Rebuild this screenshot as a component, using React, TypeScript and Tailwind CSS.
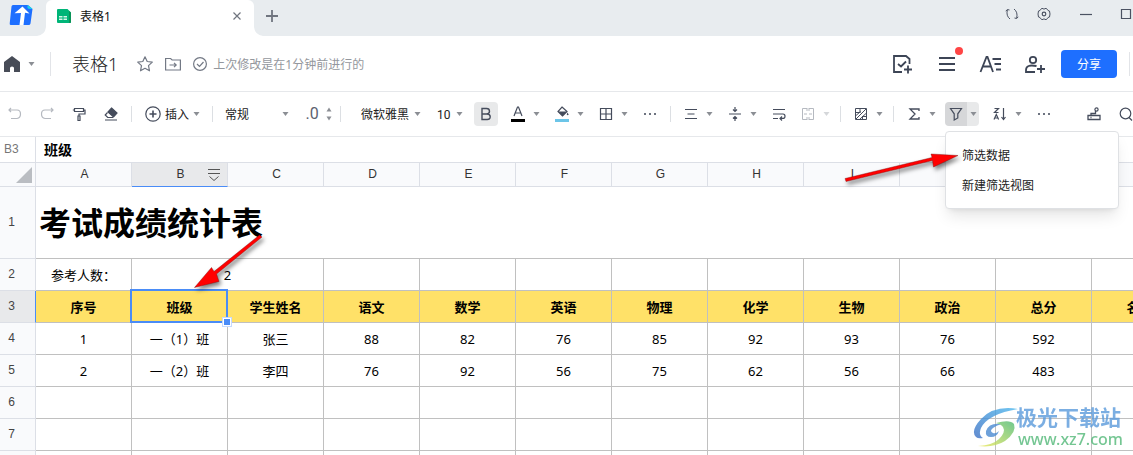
import { useState } from 'react'
import type { ReactNode } from 'react'

type Row = { id: number; values: string[] }

const COLUMNS = ['A', 'B', 'C', 'D', 'E', 'F', 'G', 'H', 'I', 'J', 'K', 'L']

const SUBJECTS = ['序号', '班级', '学生姓名', '语文', '数学', '英语', '物理', '化学', '生物', '政治', '总分', '名次']

const ROWS: Row[] = [
  { id: 4, values: ['1', '一（1）班', '张三', '88', '82', '76', '85', '92', '93', '76', '592', ''] },
  { id: 5, values: ['2', '一（2）班', '李四', '76', '92', '56', '75', '62', '56', '66', '483', ''] },
  { id: 6, values: Array(12).fill('') },
  { id: 7, values: Array(12).fill('') },
  { id: 8, values: Array(12).fill('') },
]

const CELL = 'h-8 border-r border-b border-[#c0c0c0] p-0 text-center text-[13px] leading-4 whitespace-nowrap'
const ROW_HEAD = "h-8 border-r border-b border-[#dcdfe6] p-0 pr-3 pb-0.5 text-center font-['Liberation_Sans',sans-serif] text-xs font-normal text-[#444]"

function Caret({ light }: { light?: boolean }) {
  return (
    <svg viewBox="0 0 7 4" className={`h-1 w-[7px] shrink-0 ${light ? 'text-[#d5d7da]' : 'text-[#8b8e94]'}`} fill="currentColor">
      <path d="M.5 0h6L3.500 4z" />
    </svg>
  )
}

function Icon({ children, size = 's' }: { children: ReactNode; size?: 's' | 'm' | 'l' }) {
  const box = size === 's' ? '0 0 14 14' : size === 'm' ? '0 0 16 16' : '0 0 22 22'
  const cls = size === 's' ? 'size-3.5' : size === 'm' ? 'size-4' : 'size-[22px]'
  return (
    <svg viewBox={box} className={`${cls} shrink-0`} fill="none" stroke="currentColor" strokeWidth={size === 'l' ? 1.8 : 1.2}>
      {children}
    </svg>
  )
}

function Tool({ label, caret, light, children }: { label: string; caret?: boolean; light?: boolean; children: ReactNode }) {
  return (
    <button type="button" aria-label={label} className={`flex shrink-0 items-center gap-2 ${light ? 'text-[#b5b9c0]' : ''}`}>
      {children}
      {caret && <Caret light={light} />}
    </button>
  )
}

function Divider() {
  return <span className="h-4 w-px shrink-0 bg-[#dcdfe3]" />
}

function Picker({ label, options, className }: { label: string; options: string[]; className: string }) {
  return (
    <span className={`relative flex shrink-0 items-center text-xs ${className}`}>
      <select aria-label={label} className="w-full appearance-none bg-transparent p-0 pt-0.5 text-[#222] outline-none">
        {options.map(o => <option key={o}>{o}</option>)}
      </select>
      <span className="pointer-events-none absolute right-0 flex"><Caret /></span>
    </span>
  )
}

function Dots() {
  return (
    <svg viewBox="0 0 14 14" className="size-3.5" fill="#6d7380">
      <rect x="1" y="6" width="2" height="2" />
      <rect x="6" y="6" width="2" height="2" />
      <rect x="11" y="6" width="2" height="2" />
    </svg>
  )
}

function TitleBar() {
  return (
    <div className="flex h-9 shrink-0 bg-[#e8ecef] text-[#4b5262]">
      <svg viewBox="0 0 24 21" className="mt-[5px] ml-[9px] h-[21px] w-6" aria-label="文档">
        <path d="M4 0h15l4.500 4-2 14.500q-.3 1.500-2 1.500H2Q.5 20 .7 18.500L2.500 1.500Q2.700 0 4 0z" fill="#1e6fff" />
        <path d="M18.500 0l5 3.800q-4 .5-5-.8z" fill="#19d3e8" />
        <path d="M13.500 1.500l7 7-4.500-.7L14.500 20h-4L12 8l-6.500.2z" fill="#fff" />
      </svg>
      <div className="relative ml-[13px] flex w-52 items-center rounded-t-md bg-white pb-1">
        <svg viewBox="0 0 9 9" className="absolute bottom-0 -left-[9px] size-[9px]"><path d="M9 0v9H0Q8 8 9 0z" fill="#fff" /></svg>
        <svg viewBox="0 0 9 9" className="absolute -right-[9px] bottom-0 size-[9px]"><path d="M0 0v9h9Q1 8 0 0z" fill="#fff" /></svg>
        <svg viewBox="0 0 14 14" className="ml-[11px] size-3.5">
          <path d="M1 0h9.500L14 3.500V13q0 1-1 1H1q-1 0-1-1V1q0-1 1-1z" fill="#00b578" />
          <path d="M12 2l2 1.500V13q0 1-1 1h-1z" fill="#0a9358" />
          <path d="M2 7h3.500v1.500H2zM6.500 7H10v1.500H6.500zM2 9.500h3.500V11H2zM6.500 9.500H10V11H6.500z" fill="#d8f5e9" />
        </svg>
        <span className="ml-[9px] pt-0.5 text-xs text-[#111]">表格1</span>
        <button type="button" aria-label="关闭标签" className="mr-2.5 ml-auto text-[#70757f]">
          <Icon><path d="M3.500 3.500l7 7M10.500 3.500l-7 7" /></Icon>
        </button>
      </div>
      <button type="button" aria-label="新建标签" className="ml-[11px] flex items-center pb-1 text-[#70757f]">
        <Icon><path d="M7 1v12M1 7h12" strokeWidth="1.800" /></Icon>
      </button>
      <div className="ml-auto flex items-center gap-[18px] pb-2">
        <button type="button" aria-label="刷新">
          <Icon><path d="M5 12Q1 9 2.300 3M.8 4.200L2.300 2.500 4.500 3M9 2q4 3 2.700 9M13.200 9.800l-1.500 1.700L9.500 11" strokeWidth="1" /></Icon>
        </button>
        <button type="button" aria-label="设置">
          <Icon>
            <path d="M4.500 1.500h1.500l1 .8 1-.8h1.500l1.500 2 1.500.5.5 3-.5 3-1.500.5-1.500 2H8l-1-.8-1 .8H4.500L3 10.500 1.500 10 1 7l.5-3L3 3.500z" strokeWidth="1" />
            <circle cx="7" cy="7" r="1.800" />
          </Icon>
        </button>
        <button type="button" aria-label="最小化" className="ml-2.5"><Icon><path d="M1 7.500h12" /></Icon></button>
        <button type="button" aria-label="最大化" className="ml-2"><Icon><path d="M2.500 2.500h9v9h-9z" /></Icon></button>
      </div>
    </div>
  )
}

function DocHeader() {
  return (
    <header className="flex h-14 shrink-0 items-center border-b border-[#e6e8eb] text-[#3d4556]">
      <button type="button" aria-label="首页" className="ml-1 flex items-center gap-2 text-[#474c57]">
        <svg viewBox="0 0 16 16" className="size-4" fill="currentColor"><path d="M8 0l8 6v9.500q0 .5-.5.5H10v-4q0-1.500-2-1.500T6 12v4H.5Q0 16 0 15.500V6z" /></svg>
        <Caret />
      </button>
      <span className="ml-[15px] h-6 w-px shrink-0 bg-[#e2e4e8]" />
      <h1 className="ml-[21px] text-lg font-light whitespace-nowrap text-[#222]">表格1</h1>
      <div className="ml-[19px] flex items-center gap-3 text-[#737985]">
        <button type="button" aria-label="收藏"><Icon size="m"><path d="M8 .8l2.200 4.700 5.100.6-3.800 3.500 1 5.200L8 12.300l-4.500 2.500 1-5.200L.7 6.100l5.100-.6z" strokeLinejoin="round" /></Icon></button>
        <button type="button" aria-label="移动到文件夹"><Icon size="m"><path d="M.6 2.500h5l1.500 1.500h8.300v10H.6zM4.500 9h6.500M9 6.800L11.200 9 9 11.200" /></Icon></button>
        <span className="flex items-center gap-1 text-xs whitespace-nowrap text-[#94979d]">
          <span className="flex text-[#737985]"><Icon size="m"><circle cx="7" cy="8" r="6.400" /><path d="M4 8l2.500 2.500 4-4.500" /></Icon></span>
          <span className="pt-0.5">上次修改是在1分钟前进行的</span>
        </span>
      </div>
      <div className="ml-auto flex items-center gap-[22px]">
        <button type="button" aria-label="添加任务">
          <Icon size="l"><path d="M18.500 11V6L15 3H3v16h8M17 12.500v8M13 16.500h8M7 11l3 2.500 5-5" /></Icon>
        </button>
        <button type="button" aria-label="菜单" className="relative">
          <Icon size="l"><path d="M4 5h16M4 11h16M4 17h16" /></Icon>
          <span className="absolute -top-1.5 -right-1.5 size-2 rounded-full bg-[#ff4545]" />
        </button>
        <button type="button" aria-label="样式">
          <Icon size="l"><path d="M1.500 19L7.500 4h1l5.500 15M4 13.500h8.500M13.500 6H22.500M15.500 11h7M17 16.500h5.500" /></Icon>
        </button>
        <button type="button" aria-label="添加成员">
          <Icon size="l"><circle cx="10" cy="7" r="3.200" /><path d="M13.500 13Q3 11 3 17v2h9M18 12v8M14 16h8" /></Icon>
        </button>
        <button type="button" className="-ml-1.5 h-7 w-14 rounded bg-[#1e6fff] pt-0.5 text-xs text-white">分享</button>
        <span className="-ml-2.5 mr-[3px] h-6 w-px bg-[#e2e4e8]" />
      </div>
    </header>
  )
}

function FilterTool() {
  const [open, setOpen] = useState(true)
  return (
    <div className="relative ml-[9px] flex shrink-0">
      <button type="button" aria-label="筛选" className="flex h-6 w-[22px] items-center justify-center rounded-l-sm bg-[#d6d7d9]">
        <Icon><path d="M1.500 1.500h11L8.800 6.800v4.200l-3.600 2V6.800z" /></Icon>
      </button>
      <button type="button" aria-label="筛选选项" aria-expanded={open} onClick={() => setOpen(!open)} className="flex h-6 w-3 items-center justify-center rounded-r-sm bg-[#e8e9ea]">
        <Caret />
      </button>
      {open && (
        <div role="menu" className="absolute top-[29px] left-0 z-20 flex w-[174px] flex-col rounded border border-[#dfe1e4] bg-white py-2 shadow-lg">
          {['筛选数据', '新建筛选视图'].map(item => (
            <button key={item} type="button" role="menuitem" className="h-[30px] px-4 pt-0.5 text-left text-xs text-[#222] hover:bg-gray-100">{item}</button>
          ))}
        </div>
      )}
    </div>
  )
}

function Toolbar() {
  return (
    <div className="flex h-[45px] shrink-0 items-center border-b border-[#e6e8eb] pl-2 text-[#454c5c]">
      <div className="flex items-center gap-[18px]">
        <Tool label="撤销" light><Icon><path d="M3 1L1 3l2 2M1 3H9q3.500 0 3.500 4T9 11.500H3" /></Icon></Tool>
        <Tool label="重做" light><Icon><path d="M11 1l2 2-2 2M13 3H5Q1.500 3 1.500 7T5 11.500h6" /></Icon></Tool>
        <Tool label="格式刷"><Icon><path d="M2.500 1.500h9v3h-9zM2.500 3H.8M11.500 3h1.500v4H7v2M6 9h2v4.500H6z" /></Icon></Tool>
        <Tool label="清除格式">
          <Icon><path d="M7.500 1l5.500 5-3.500 4-5.500-5z" fill="currentColor" /><path d="M3.500 5.500L1.200 8l2.500 2.500H9M1 13h12" /></Icon>
        </Tool>
      </div>
      <div className="ml-[13px] flex items-center gap-3">
        <Divider />
        <button type="button" className="ml-px flex items-center gap-1 text-xs whitespace-nowrap text-[#222]">
          <span className="flex text-[#454c5c]"><Icon size="m"><circle cx="8" cy="8" r="7.200" /><path d="M8 4.500v7M4.500 8h7" strokeWidth="1.600" /></Icon></span>
          <span className="pt-0.5">插入</span>
          <Caret />
        </button>
        <Divider />
        <Picker label="数字格式" options={['常规', '数字', '百分比']} className="w-16" />
      </div>
      <button type="button" className="ml-4 w-3.5 font-['Roboto',sans-serif] text-base text-[#5c626e]">.0</button>
      <button type="button" aria-label="调整小数位数" className="ml-1.5 text-[#8b8e94]">
        <svg viewBox="0 0 8 14" className="h-3.5 w-2" fill="currentColor"><path d="M1.500 4.500h5L4 .5zM1.500 9.500h5L4 13.500z" /></svg>
      </button>
      <div className="ml-[7px] flex items-center"><Divider /></div>
      <Picker label="字体" options={['微软雅黑', '宋体', '黑体']} className="ml-5 w-[60px]" />
      <Picker label="字号" options={['10', '12', '14']} className="ml-4 w-[26px] font-['Roboto',sans-serif]" />
      <button type="button" aria-label="加粗" className="ml-[11px] flex size-6 shrink-0 items-center justify-center rounded-sm bg-[#e8e9ea]">
        <Icon><path d="M3 1.500h4.500q3 0 3 2.700T7.500 7H3zM3 7h5q3.200 0 3.200 2.800T8 12.500H3z" strokeWidth="1.400" /></Icon>
      </button>
      <div className="ml-[13px] flex items-center gap-[15px]">
        <Tool label="字体颜色" caret>
          <svg viewBox="0 0 14 16" className="h-4 w-3.5" fill="none" stroke="currentColor" strokeWidth="1.200">
            <path d="M3 10L6.500 1h1L11 10M4.200 7h5.600" />
            <path d="M0 13h14v3H0z" fill="#000" stroke="none" />
          </svg>
        </Tool>
        <Tool label="填充颜色" caret>
          <svg viewBox="0 0 14 16" className="h-4 w-3.5" fill="none" stroke="currentColor" strokeWidth="1.200">
            <path d="M7 1l5 4.500L7.500 10 3 5.500z" />
            <path d="M3 5.500h9L7.500 10zM12.500 6.500l1.200 2q-1 1.500-2 0z" fill="currentColor" stroke="none" />
            <path d="M0 13h14v3H0z" fill="#6cc5e8" stroke="none" />
          </svg>
        </Tool>
        <Tool label="边框" caret><Icon><path d="M1.500 1.500h11v11h-11zM7 1.500v11M1.500 7h11" /></Icon></Tool>
        <Tool label="更多格式"><Dots /></Tool>
      </div>
      <div className="ml-[13px] flex items-center gap-[13px]">
        <Divider />
        <div className="flex items-center gap-[15px]">
          <Tool label="水平对齐" caret><Icon><path d="M1 2.500h12M3.500 7h7M1 11.500h12" strokeWidth="1.200" /></Icon></Tool>
          <Tool label="垂直对齐" caret><Icon><path d="M1 7h12M7 0v4M5 2.500l2 2 2-2M7 14v-4M5 11.500l2-2 2 2" /></Icon></Tool>
          <Tool label="自动换行"><Icon><path d="M1 2.500h12M1 7h10q2 0 2 2.200t-2 2.200H8M10 9.500L8 11.500l2 2M1 11.500h5" /></Icon></Tool>
          <Tool label="合并单元格" caret light><Icon><path d="M6 1.500H1.500V5M8 1.500h4.500V5M1.500 9v3.500H6M12.500 9v3.500H8M1.500 5v4M12.500 5v4M6 1v3M8 1v3M6 10v3M8 10v3M3 7h3M8 7h3" strokeWidth="1" /></Icon></Tool>
        </div>
      </div>
      <div className="ml-2.5 flex items-center gap-[13px]">
        <Divider />
        <Tool label="条件格式" caret><Icon><path d="M1.500 1.500h11v11h-11zM1.500 5.500h5M8.500 9.500h4M6 1.500v4M8.500 9v3.500M2 12L12 2M2 8.500l4.500-4M6 12l6.500-6" strokeWidth="1" /></Icon></Tool>
      </div>
      <div className="ml-2.5 flex items-center gap-[13px]">
        <Divider />
        <Tool label="求和" caret><Icon><path d="M12 4V2H3l5 5-5 5h9v-2" strokeWidth="1.300" /></Icon></Tool>
      </div>
      <FilterTool />
      <div className="ml-3.5 flex items-center gap-[15px]">
        <Tool label="排序" caret><Icon><path d="M1.500 1.500h4l-4 4h4M1 12.500l2.300-5 2.300 5M2 11h3M10.500 1v11M8.500 10l2 2.500 2-2.500" /></Icon></Tool>
        <Tool label="更多工具"><Dots /></Tool>
      </div>
      <div className="ml-auto flex items-center gap-[18px]">
        <Tool label="固定工具栏"><Icon><path d="M1 8.500h12v4H1zM4 8.500V6.500h4.500V4M3.500 10.500h1" strokeWidth="1.300" /><circle cx="9.500" cy="2.500" r="1.600" /></Icon></Tool>
        <Tool label="搜索"><Icon><circle cx="6.500" cy="6.500" r="5.300" /><path d="M10 10.500l3 3" /></Icon></Tool>
      </div>
    </div>
  )
}

function FormulaBar() {
  return (
    <div className="flex h-[26px] shrink-0 items-center border-b border-[#dcdfe6]">
      <input aria-label="单元格" defaultValue="B3" className="h-full w-9 shrink-0 border-r border-[#dcdfe6] pb-0.5 pl-1 font-['Liberation_Sans',sans-serif] text-xs text-[#777] outline-none" />
      <input aria-label="编辑栏" defaultValue="班级" className="h-full flex-1 pb-0.5 pl-2 text-sm font-bold text-black outline-none" />
    </div>
  )
}

function Sheet() {
  return (
    <table className="w-[1188px] table-fixed border-separate border-spacing-0 text-black">
      <colgroup>
        <col className="w-9" />
        {COLUMNS.map(c => <col key={c} className="w-24" />)}
      </colgroup>
      <thead>
        <tr className="bg-[#f9fafc]">
          <th className="h-6 border-r border-b border-[#dcdfe6] p-0">
            <svg viewBox="0 0 16 16" className="ml-4 size-4" fill="#babdc2"><path d="M16 0v16H0z" /></svg>
          </th>
          {COLUMNS.map(c => (
            <th key={c} scope="col" className={`relative h-6 border-r border-b p-0 pb-0.5 pl-0.5 font-['Liberation_Sans',sans-serif] text-xs font-normal text-[#333] ${c === 'B' ? 'border-r-[#dcdfe6] border-b-[#4a8cf7] bg-[#e8e9eb]' : 'border-[#dcdfe6]'}`}>
              {c}
              {c === 'B' && (
                <svg viewBox="0 0 12 12" className="absolute top-1.5 right-[7px] size-3" fill="none" stroke="#555" strokeWidth="1">
                  <path d="M0 .5h12M0 4.500h12M1.500 7.500L6 11.500l4.500-4" />
                </svg>
              )}
            </th>
          ))}
        </tr>
      </thead>
      <tbody>
        <tr>
          <th scope="row" className={`${ROW_HEAD} bg-[#f9fafc]`}>1</th>
          <td colSpan={12} className="h-[72px] border-b border-[#c0c0c0] p-0 pl-[3px] text-left text-[32px] leading-10 font-bold">考试成绩统计表</td>
        </tr>
        <tr>
          <th scope="row" className={`${ROW_HEAD} bg-[#f9fafc]`}>2</th>
          <td className={CELL}>参考人数：</td>
          <td colSpan={2} className={CELL}>2</td>
          {SUBJECTS.slice(3).map(s => <td key={s} className={CELL} />)}
        </tr>
        <tr className="bg-[#ffe168]">
          <th scope="row" className="h-8 border-r border-b border-r-[#4a8cf7] border-b-[#dcdfe6] bg-[#e8e9eb] p-0 pr-3 pb-0.5 font-['Liberation_Sans',sans-serif] text-xs font-normal text-[#444]">3</th>
          {SUBJECTS.map((s, i) => (
            <td key={s} className={`${CELL} relative font-bold`}>
              {s}
              {i === 1 && (
                <span className="absolute -inset-px -top-0.5 -left-0.5 z-10 border-2 border-[#4a8cf7]">
                  <span className="absolute -right-[5px] -bottom-[5px] size-2 border border-white bg-[#4a8cf7] outline outline-[#c5daff]" />
                </span>
              )}
            </td>
          ))}
        </tr>
        {ROWS.map(row => (
          <tr key={row.id}>
            <th scope="row" className={`${ROW_HEAD} bg-[#f9fafc]`}>{row.id}</th>
            {row.values.map((v, i) => <td key={i} className={CELL}>{v}</td>)}
          </tr>
        ))}
      </tbody>
    </table>
  )
}

function Arrows() {
  return (
    <svg width="1133" height="455" viewBox="0 0 1133 455" className="pointer-events-none absolute top-0 left-0 z-30 drop-shadow-[2px_3px_2px_rgba(0,0,0,0.5)]" fill="#ff0000" stroke="#7a1010" strokeWidth="0.400">
      <path d="M845 178.500l87-21L931 154l27 1.500-24.500 11.500-1-6.500L846 181.500z" />
      <path d="M262 237l-45.500 37 2.500 7.500-24.500 6 17-20 2.500 4L259.500 235z" />
    </svg>
  )
}

function Watermark() {
  return (
    <div className="pointer-events-none absolute right-2.5 bottom-1.5 z-10 flex items-center opacity-80">
      <svg viewBox="0 0 48 44" className="h-11 w-12">
        <defs>
          <linearGradient id="swoosh" x1="0" y1="1" x2="1" y2="0">
            <stop offset="0" stopColor="#3c6fc4" />
            <stop offset="1" stopColor="#4db8ee" />
          </linearGradient>
          <linearGradient id="leaf" x1="0" y1="1" x2="1" y2="0">
            <stop offset="0" stopColor="#f0e95a" />
            <stop offset="1" stopColor="#4dbb74" />
          </linearGradient>
        </defs>
        <path d="M46 4Q22 0 9 14-2 26 4 32q2 2 7 1-5-3-2-10Q16 9 46 4z" fill="url(#swoosh)" />
        <path d="M30 19q-13-2-16 7-1 6 5 6 6 0 8-6-3 3-6 2-4-2 0-5 4-3 9-4z" fill="#4a8ad2" />
        <path d="M24 18q14-4 18 1 3 8-9 17-11 7-27 5 15-1 21-7 7-7 4-12-2-3-7-4z" fill="url(#leaf)" />
      </svg>
      <div className="-ml-1 flex flex-col whitespace-nowrap">
        <span className="text-[21px] leading-6 font-bold text-[#5b9bdc]">极光下载站</span>
        <span className="pl-0.5 text-base leading-5 font-medium text-[#52b878]">www.xz7.com</span>
      </div>
    </div>
  )
}

export default function App() {
  return (
    <div className="relative flex h-screen flex-col overflow-hidden bg-white font-['Noto_Sans','Noto_Sans_CJK_SC',sans-serif]">
      <TitleBar />
      <DocHeader />
      <Toolbar />
      <FormulaBar />
      <main className="min-h-0 flex-1 overflow-hidden">
        <Sheet />
      </main>
      <Watermark />
      <Arrows />
    </div>
  )
}
